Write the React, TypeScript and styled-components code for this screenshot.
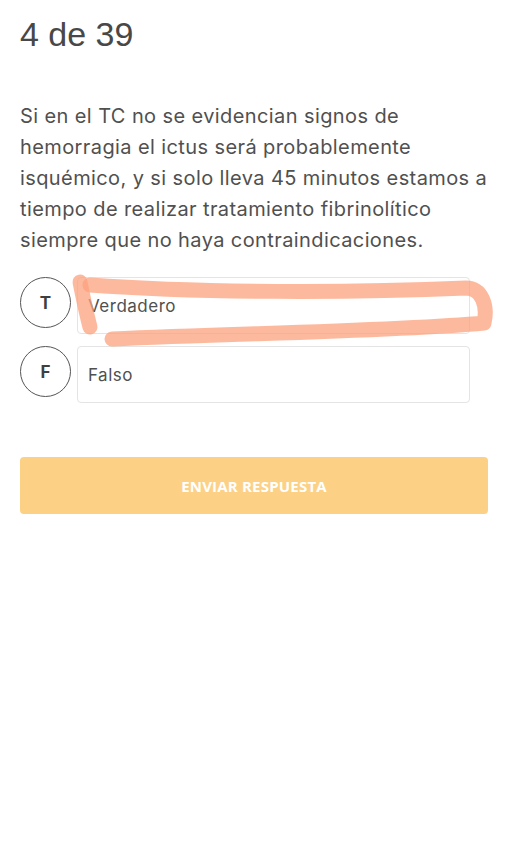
import React from "react"
import styled, { createGlobalStyle } from 'styled-components';

const GlobalStyle = createGlobalStyle`
  html, body {
    margin: 0;
    padding: 0;
    background: #ffffff;
  }
`;

const options = [
  { letter: 'T', label: 'Verdadero' },
  { letter: 'F', label: 'Falso' },
];

export default function App() {
  return (
    <Page>
      <GlobalStyle />
      <Counter>4 de 39</Counter>
      <Question>
        Si en el TC no se evidencian signos de hemorragia el ictus será probablemente
        isquémico, y si solo lleva 45 minutos estamos a tiempo de realizar tratamiento
        fibrinolítico siempre que no haya contraindicaciones.
      </Question>
      <Options>
        {options.map((opt) => (
          <OptionRow key={opt.letter}>
            <Letter>{opt.letter}</Letter>
            <OptionBox>{opt.label}</OptionBox>
          </OptionRow>
        ))}
      </Options>
      <SubmitButton>ENVIAR RESPUESTA</SubmitButton>
      <Scribble width="509" height="848" viewBox="0 0 509 848">
        <path d="M80 282 C 83 297, 86 312, 90 327" />
        <path d="M90 285 C 200 293, 350 293, 466 288 C 482 288, 488 306, 484 323 C 400 331, 250 333, 112 339" />
      </Scribble>
    </Page>
  );
}

const Page = styled.div`
  position: relative;
  width: 509px;
  min-height: 848px;
  box-sizing: border-box;
  padding: 12px 20px 0 20px;
  font-family: Inter, "Liberation Sans", sans-serif;
  color: #4f4f4f;
`;

const Counter = styled.h1`
  margin: 0;
  font-family: "Liberation Sans", Arial, sans-serif;
  font-size: 34px;
  font-weight: 400;
  line-height: 44px;
  color: #484848;
`;

const Question = styled.p`
  margin: 45px 0 0 0;
  font-size: 20px;
  line-height: 31px;
  color: #505050;
  width: 470px;
  letter-spacing: 0.4px;
`;

const Options = styled.div`
  margin-top: 21px;
  display: flex;
  flex-direction: column;
  gap: 12px;
`;

const OptionRow = styled.div`
  display: flex;
  align-items: flex-start;
  gap: 6px;
`;

const Letter = styled.div`
  box-sizing: border-box;
  width: 51px;
  height: 51px;
  border-radius: 50%;
  border: 1px solid #555;
  display: flex;
  align-items: center;
  justify-content: center;
  font-weight: 700;
  font-size: 17px;
  color: #3f3f3f;
  flex-shrink: 0;
`;

const OptionBox = styled.div`
  box-sizing: border-box;
  width: 393px;
  height: 57px;
  border: 1px solid #e4e4e4;
  border-radius: 4px;
  display: flex;
  align-items: center;
  padding-left: 10px;
  font-size: 17px;
  letter-spacing: 0.5px;
  color: #505050;
`;

const SubmitButton = styled.button`
  display: block;
  margin-top: 54px;
  width: 468px;
  height: 57px;
  border: none;
  border-radius: 4px;
  background: #fdd185;
  color: #ffffff;
  font-family: "Open Sans", sans-serif;
  font-weight: 700;
  font-size: 15px;
  letter-spacing: 0.2px;
`;

const Scribble = styled.svg`
  position: absolute;
  top: 0;
  left: 0;
  pointer-events: none;

  path {
    fill: none;
    stroke: #fca27e;
    stroke-opacity: 0.75;
    stroke-width: 15;
    stroke-linecap: round;
    stroke-linejoin: round;
  }
`;
